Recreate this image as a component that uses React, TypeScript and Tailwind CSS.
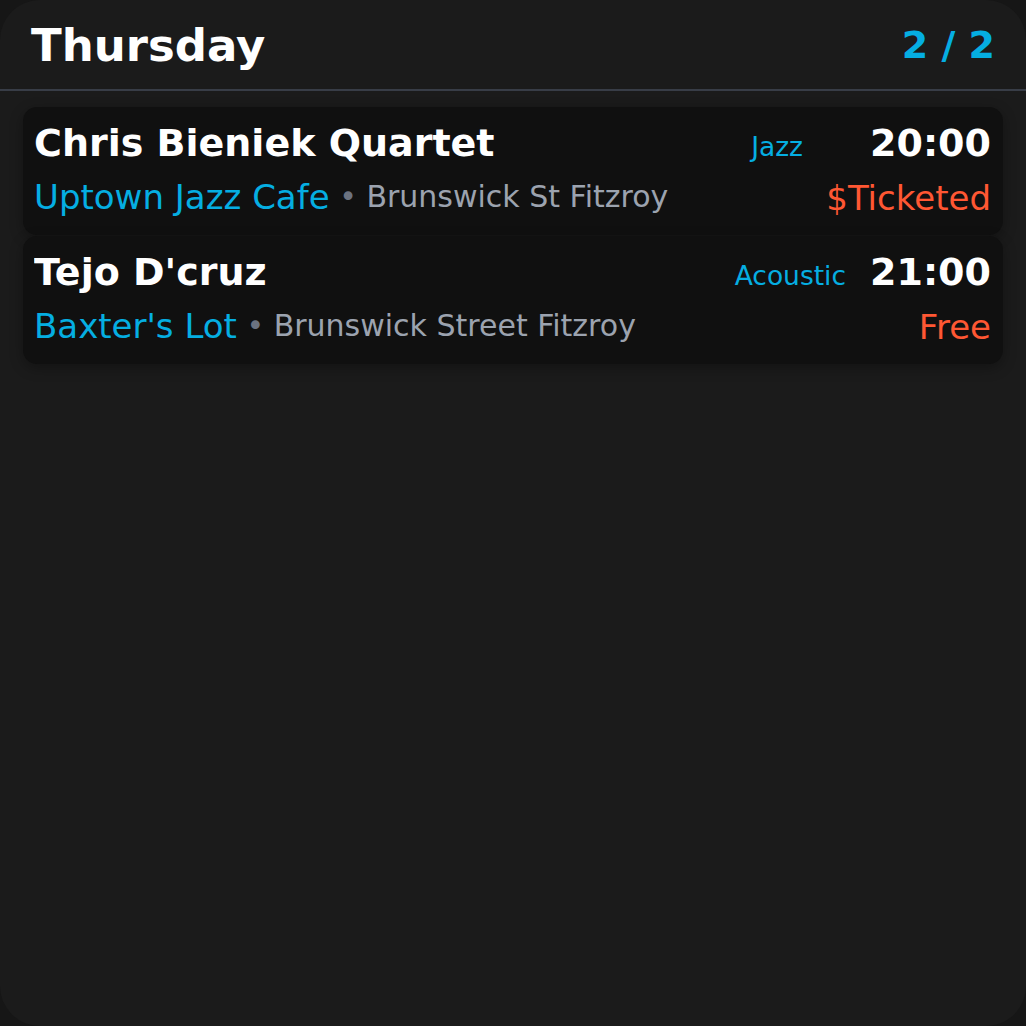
import React from 'react';

type Gig = {
    name: string;
    venue: string;
    suburb: string;
    genre: string;
    time: string;
    price: string;
    genreGap: string;
};

const gigs: Gig[] = [
    {
        name: "Chris Bieniek Quartet",
        venue: "Uptown Jazz Cafe",
        suburb: "Brunswick St Fitzroy",
        genre: "Jazz",
        time: "20:00",
        price: "$Ticketed",
        genreGap: "mr-[67px]",
    },
    {
        name: "Tejo D'cruz",
        venue: "Baxter's Lot",
        suburb: "Brunswick Street Fitzroy",
        genre: "Acoustic",
        time: "21:00",
        price: "Free",
        genreGap: "mr-[24px]",
    },
];

function GigCard({ gig }: { gig: Gig }) {
    return <div className="rounded-[14px] bg-[#101010] pl-[11px] pr-[12px] pt-[8px] pb-[23px] shadow-[0_4px_14px_rgba(0,0,0,0.3)]">
        <div className="flex flex-row items-baseline h-[44px]">
            <span className="flex-1 text-[38px] leading-[44px] font-bold text-white truncate">{gig.name}</span>
            <span className={`text-[26.5px] text-[#05aee2] ${gig.genreGap}`}>{gig.genre}</span>
            <span className="text-[38px] font-bold text-white">{gig.time}</span>
        </div>
        <div className="mt-[13px] flex flex-row items-baseline h-[40px]">
            <div className="flex-1 flex flex-row items-center leading-[40px] min-w-0">
                <span className="text-[34px] text-[#05aee2]">{gig.venue}</span>
                <span className="whitespace-pre text-[30px] text-[#6b7280]"> • </span>
                <span className="text-[30px] text-[#9ca3af] truncate">{gig.suburb}</span>
            </div>
            <span className="text-[34px] text-[#ff5733] relative top-[1px]">{gig.price}</span>
        </div>
    </div>
}

export default function App() {
    return <div className="w-[1026px] h-[1026px] bg-[#161616]" style={{ fontFamily: '"DejaVu Sans", sans-serif' }}>
        <div className="w-full h-full rounded-[40px] bg-[#1b1b1b] overflow-hidden flex flex-col">
            <header className="h-[91px] shrink-0 flex flex-row items-center justify-between pl-[31px] pr-[31px] pt-[2px] border-b-2 border-[#383d47]">
                <h1 className="text-[45px] font-bold text-white">Thursday</h1>
                <span className="text-[38px] font-bold text-[#05aee2]">2 / 2</span>
            </header>
            <main className="px-[23px] pt-[16px] flex flex-col gap-px">
                {gigs.map((gig) => <GigCard key={gig.name} gig={gig} />)}
            </main>
        </div>
    </div>
}
